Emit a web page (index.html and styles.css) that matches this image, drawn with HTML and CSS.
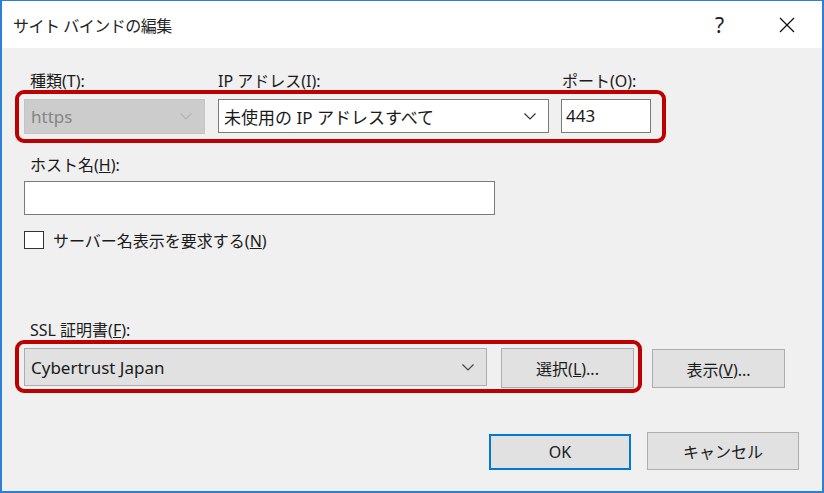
FILE: index.html
```html
<!DOCTYPE html>
<html lang="ja">
<head>
    <meta charset="UTF-8">
    <title>サイト バインドの編集</title>
    <link rel="stylesheet" href="styles.css">
</head>
<body>
<div class="window">
    <div class="titlebar">
        <span class="title">サイト バインドの編集</span>
        <span class="help">?</span>
        <svg class="close" width="16" height="16" viewBox="0 0 16 16">
            <path d="M1 1 L15 15 M15 1 L1 15" stroke="#111" stroke-width="1.3" fill="none"/>
        </svg>
    </div>

    <div class="content">
        <div class="labels top-labels">
            <span class="lbl-type">種類(T):</span>
            <span class="lbl-ip">IP アドレス(I):</span>
            <span class="lbl-port">ポート(O):</span>
        </div>

        <div class="highlight hl-first">
            <div class="combo combo-disabled type-combo">
                <span>https</span>
                <svg width="12" height="7" viewBox="0 0 12 7"><path d="M0.5 0.5 L6 6 L11.5 0.5" stroke="#b4b4b4" stroke-width="1.2" fill="none"/></svg>
            </div>
            <div class="combo ip-combo">
                <span>未使用の IP アドレスすべて</span>
                <svg width="12" height="7" viewBox="0 0 12 7"><path d="M0.5 0.5 L6 6 L11.5 0.5" stroke="#333" stroke-width="1.2" fill="none"/></svg>
            </div>
            <div class="textbox port-box">443</div>
        </div>

        <div class="labels host-label">ホスト名(<u>H</u>):</div>
        <div class="textbox host-box"></div>

        <div class="check-row">
            <span class="checkbox"></span>
            <span>サーバー名表示を要求する(<u>N</u>)</span>
        </div>

        <div class="labels ssl-label">SSL 証明書(<u>F</u>):</div>
        <div class="cert-row">
            <div class="highlight hl-second">
                <div class="combo combo-readonly cert-combo">
                    <span>Cybertrust Japan</span>
                    <svg width="12" height="7" viewBox="0 0 12 7"><path d="M0.5 0.5 L6 6 L11.5 0.5" stroke="#444" stroke-width="1.2" fill="none"/></svg>
                </div>
                <button class="btn btn-select">選択(<u>L</u>)...</button>
            </div>
            <button class="btn btn-view">表示(<u>V</u>)...</button>
        </div>

        <div class="footer">
            <button class="btn btn-ok">OK</button>
            <button class="btn btn-cancel">キャンセル</button>
        </div>
    </div>
</div>
</body>
</html>
```

FILE: styles.css
```css
* {
    box-sizing: border-box;
}

body {
    margin: 0;
    font-family: "Noto Sans", "Noto Sans CJK JP", sans-serif;
    font-size: 16px;
    color: #1a1a1a;
}

.window {
    width: 824px;
    height: 493px;
    border: 2px solid #2c7fd6;
    border-top-width: 1px;
    background: #f0f0f0;
    display: flex;
    flex-direction: column;
}

.titlebar {
    height: 47px;
    background: #fff;
    display: flex;
    align-items: center;
    padding-left: 11px;
}

.title {
    font-size: 16px;
    flex: 1;
    color: #222;
    letter-spacing: -0.5px;
}

.help {
    font-size: 21px;
    margin-right: 55px;
    color: #222;
}

.close {
    margin-right: 27px;
}

.content {
    flex: 1;
    padding-left: 13px;
}

.labels {
    height: 18px;
    line-height: 18px;
    font-size: 16px;
}

.top-labels {
    margin-top: 24px;
    display: flex;
    padding-left: 15px;
}

.lbl-type {
    width: 188px;
}

.lbl-ip {
    width: 344px;
}

.highlight {
    border: 4px solid #bd0000;
    border-radius: 9px;
    display: flex;
}

.hl-first {
    width: 651px;
    height: 53px;
    padding: 5px 0 0 5px;
}

.combo {
    height: 35px;
    display: flex;
    align-items: center;
    justify-content: space-between;
    padding: 0 12px 0 6px;
    font-size: 17px;
}

.combo-disabled {
    background: #cccccc;
    border: 1px solid #c4c4c4;
    color: #858585;
}

.type-combo {
    width: 181px;
}

.ip-combo {
    width: 331px;
    height: 34px;
    margin-left: 13px;
    background: #fff;
    border: 1px solid #7a7a7a;
    padding-left: 5px;
}

.textbox {
    background: #fff;
    border: 1px solid #7a7a7a;
    height: 34px;
    line-height: 32px;
    padding-left: 4px;
    font-size: 17px;
}

.port-box {
    width: 90px;
    margin-left: 12px;
}

.host-label {
    margin-top: 13px;
    padding-left: 15px;
}

.host-box {
    width: 471px;
    margin: 7px 0 0 9px;
}

.check-row {
    margin: 15px 0 0 9px;
    display: flex;
    align-items: center;
    height: 20px;
}

.checkbox {
    width: 20px;
    height: 18px;
    border: 1px solid #333;
    background: #fff;
    margin-right: 9px;
}

.ssl-label {
    margin-top: 71px;
    padding-left: 15px;
}

.cert-row {
    display: flex;
    align-items: flex-start;
    margin-top: 1px;
}

.hl-second {
    width: 627px;
    height: 53px;
    padding: 4px 4px 0 5px;
}

.combo-readonly {
    background: #e1e1e1;
    border: 1px solid #adadad;
}

.cert-combo {
    width: 463px;
    height: 38px;
    padding-left: 6px;
}

.btn {
    font-family: "Noto Sans", "Noto Sans CJK JP", sans-serif;
    font-size: 16px;
    color: #1a1a1a;
    background: #e1e1e1;
    border: 1px solid #adadad;
    padding: 0;
}

.btn-select {
    width: 133px;
    height: 40px;
    margin-left: 14px;
}

.btn-view {
    width: 133px;
    height: 39px;
    margin: 9px 0 0 10px;
}

.footer {
    display: flex;
    margin: 39px 0 0 474px;
    align-items: flex-start;
}

.btn-ok {
    width: 142px;
    height: 36px;
    margin-top: 2px;
    border: 2px solid #0078d7;
}

.btn-cancel {
    width: 152px;
    height: 38px;
    margin-left: 16px;
}
```
